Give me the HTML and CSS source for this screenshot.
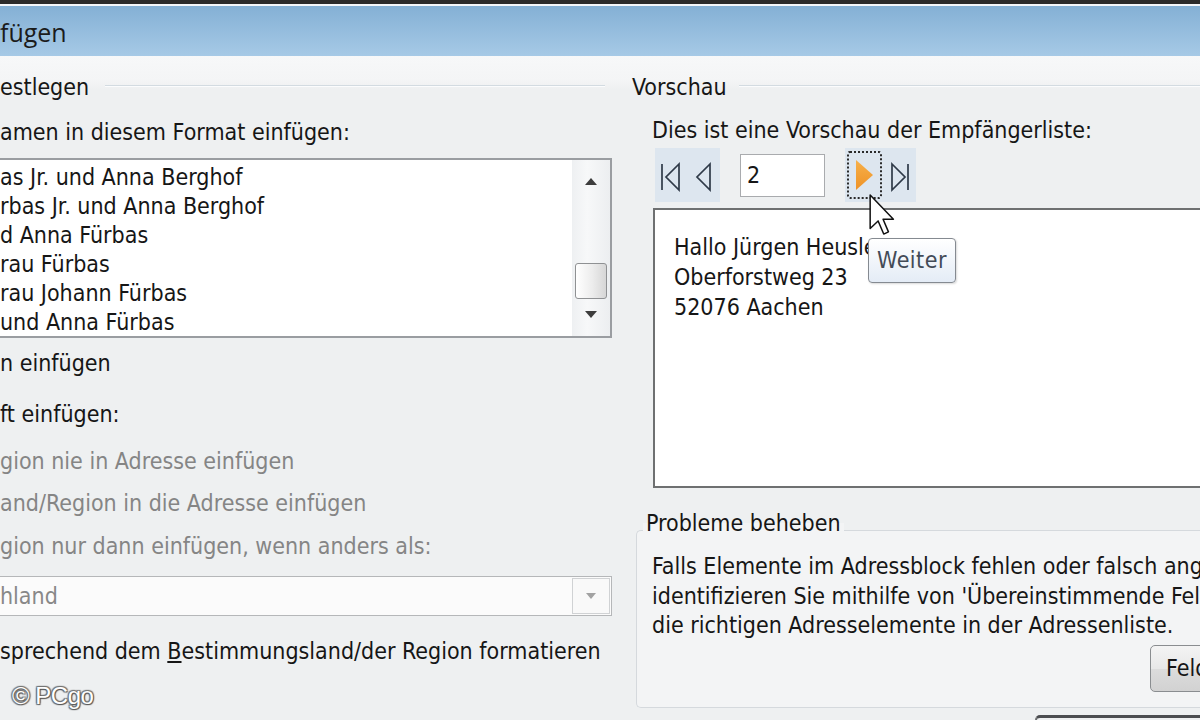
FILE: index.html
```html
<!DOCTYPE html>
<html lang="de">
<head>
<meta charset="utf-8">
<title>Adressblock einfügen</title>
<link rel="stylesheet" href="styles.css">
</head>
<body>
<div class="topline"></div>
<div class="titlebar">fügen</div>
<div class="dialog">
  <div class="left">
    <div class="grouphead"><span>estlegen</span><span class="gline gl-left"></span></div>
    <div class="row r-names">amen in diesem Format einfügen:</div>
    <div class="listbox">
      <div class="items">
        <div class="item">as Jr. und Anna Berghof</div>
        <div class="item">rbas Jr. und Anna Berghof</div>
        <div class="item">d Anna Fürbas</div>
        <div class="item">rau Fürbas</div>
        <div class="item">rau Johann Fürbas</div>
        <div class="item">und Anna Fürbas</div>
      </div>
      <div class="scrollbar">
        <div class="sb-arrow sb-up"></div>
        <div class="sb-thumb"></div>
        <div class="sb-arrow sb-down"></div>
      </div>
    </div>
    <div class="row r-firm">n einfügen</div>
    <div class="row r-post">ft einfügen:</div>
    <div class="row r-rad1 disabled">gion nie in Adresse einfügen</div>
    <div class="row r-rad2 disabled">and/Region in die Adresse einfügen</div>
    <div class="row r-rad3 disabled">gion nur dann einfügen, wenn anders als:</div>
    <div class="combo">
      <div class="combo-text">hland</div>
      <div class="combo-btn"><span class="combo-arrow"></span></div>
    </div>
    <div class="row r-fmt">sprechend dem <u>B</u>estimmungsland/der Region formatieren</div>
  </div>
  <div class="right">
    <div class="grouphead"><span>Vorschau</span><span class="gline gl-right"></span></div>
    <div class="row desc">Dies ist eine Vorschau der Empfängerliste:</div>
    <div class="nav">
      <div class="navgroup">
        <div class="navbtn">
          <svg width="33" height="54" viewBox="0 0 33 54"><path d="M7 16 V42 M24 16 L11 29 L24 42 Z" fill="none" stroke="#2f3a48" stroke-width="1.7" stroke-linejoin="miter"/></svg>
        </div>
        <div class="navbtn">
          <svg width="32" height="54" viewBox="0 0 32 54"><path d="M22 16 L9 29 L22 42 Z" fill="none" stroke="#2f3a48" stroke-width="1.7"/></svg>
        </div>
      </div>
      <div class="recnum">2</div>
      <div class="navgroup">
        <div class="navbtn focus">
          <svg width="31" height="48" viewBox="0 0 31 48"><defs><linearGradient id="og" x1="0" y1="0" x2="0" y2="1"><stop offset="0" stop-color="#f6b04a"/><stop offset="1" stop-color="#ee9226"/></linearGradient></defs><path d="M7 9 L7 39 L24 24 Z" fill="url(#og)"/></svg>
        </div>
        <div class="navbtn">
          <svg width="33" height="54" viewBox="0 0 33 54"><path d="M9 16 L22 29 L9 42 Z M25 16 V42" fill="none" stroke="#2f3a48" stroke-width="1.7"/></svg>
        </div>
      </div>
    </div>
    <div class="preview">
      <div class="pline">Hallo Jürgen Heusler</div>
      <div class="pline">Oberforstweg 23</div>
      <div class="pline">52076 Aachen</div>
      <div class="tooltip">Weiter</div>
      <svg class="cursor" width="26" height="42" viewBox="0 0 12 19.5"><path d="M0.5 0.5 L0.5 16 L4.2 12.5 L6.8 18.6 L9 17.6 L6.5 11.7 L11.3 11.7 Z" fill="#fff" stroke="#111" stroke-width="0.7" stroke-linejoin="round"/></svg>
    </div>
    <div class="group2">
      <div class="g2label">Probleme beheben</div>
      <div class="g2text">Falls Elemente im Adressblock fehlen oder falsch angezeigt werden,<br>identifizieren Sie mithilfe von 'Übereinstimmende Felder'<br>die richtigen Adresselemente in der Adressenliste.</div>
      <div class="btnrow"><div class="button">Felder</div></div>
    </div>
    <div class="nextbtn"></div>
  </div>
</div>
<div class="watermark">© PCgo</div>
</body>
</html>
```
FILE: styles.css
```css
html, body {
  margin: 0;
  padding: 0;
}
body {
  width: 1200px;
  height: 720px;
  overflow: hidden;
  position: relative;
  background: #eef0f1;
  font-family: "DejaVu Sans Condensed", "DejaVu Sans", sans-serif;
  font-stretch: condensed;
  font-size: 23px;
  letter-spacing: 0;
  color: #161616;
}
.topline {
  height: 4px;
  background: #2b2b2b;
  border-bottom: 2px solid #f4f7fa;
}
.titlebar {
  height: 50px;
  line-height: 52px;
  background: linear-gradient(#84b0d5, #a6c9e6);
  font-family: "Open Sans", "Noto Sans", sans-serif;
  font-stretch: normal;
  font-size: 25px;
  color: #1b1b1b;
}
.dialog {
  display: flex;
  gap: 20px;
  background: linear-gradient(#f7f8f9 0px, #f4f5f6 24px, #eef0f1 34px);
  height: 664px;
}
.left {
  width: 612px;
  flex: none;
  display: flex;
  flex-direction: column;
}
.right {
  width: 620px;
  flex: none;
  display: flex;
  flex-direction: column;
}
.left > *, .right > * { flex-shrink: 0; }
.grouphead {
  margin-top: 16px;
  height: 30px;
  display: flex;
  align-items: center;
  white-space: nowrap;
}
.gline {
  flex: 1;
  height: 0;
  border-top: 1px solid #d3dbe1;
  border-bottom: 1px solid #fbfcfd;
  margin-top: -2px;
}
.gl-left { margin-left: 16px; margin-right: 7px; }
.gl-right { margin-left: 12px; }
.row {
  height: 30px;
  line-height: 30px;
  white-space: nowrap;
}
.disabled { color: #858585; }
.r-names { margin-top: 15px; }
.listbox {
  margin-top: 11px;
  height: 180px;
  box-sizing: border-box;
  border: 2px solid #9a9da1;
  border-left: none;
  background: #fff;
  display: flex;
}
.items {
  flex: 1;
  padding-top: 3px;
}
.item {
  height: 29px;
  line-height: 29px;
  white-space: nowrap;
}
.scrollbar {
  width: 38px;
  flex: none;
  background: linear-gradient(90deg, #eef0f2, #f7f8f9 40%, #eceef0);
  display: flex;
  flex-direction: column;
  align-items: center;
}
.sb-arrow {
  width: 0;
  height: 0;
  border-left: 6px solid transparent;
  border-right: 6px solid transparent;
}
.sb-up {
  margin-top: 18px;
  border-bottom: 7px solid #3d3d3d;
}
.sb-thumb {
  margin-top: 78px;
  width: 30px;
  height: 34px;
  border: 1px solid #8f9193;
  border-radius: 3px;
  background: linear-gradient(90deg, #ffffff, #ececec 55%, #d6d6d6);
}
.sb-down {
  margin-top: 12px;
  border-top: 7px solid #3d3d3d;
}
.r-firm { margin-top: 10px; }
.r-post { margin-top: 21px; }
.r-rad1 { margin-top: 17px; }
.r-rad2 { margin-top: 12px; }
.r-rad3 { margin-top: 13px; }
.combo {
  margin-top: 15px;
  height: 40px;
  box-sizing: border-box;
  border: 1px solid #b5b7b9;
  border-left: none;
  background: #fbfbfb;
  display: flex;
}
.combo-text {
  flex: 1;
  line-height: 38px;
  color: #888;
}
.combo-btn {
  width: 36px;
  margin: 1px 1px 1px 0;
  border: 1px solid #d0d2d4;
  background: #f9f9f9;
  display: flex;
  align-items: center;
  justify-content: center;
}
.combo-arrow {
  width: 0;
  height: 0;
  border-left: 5px solid transparent;
  border-right: 5px solid transparent;
  border-top: 6px solid #a2a2a2;
}
.r-fmt { margin-top: 20px; }
.desc {
  margin-top: 13px;
  padding-left: 20px;
}
.nav {
  margin-top: 3px;
  height: 54px;
  padding-left: 23px;
  display: flex;
  align-items: center;
}
.navgroup {
  display: flex;
  background: #dde6ef;
  height: 54px;
}
.navbtn {
  display: flex;
  align-items: center;
  justify-content: center;
}
.navbtn svg { display: block; }
.navbtn.focus {
  margin: 3px 1px 3px 2px;
  border: 2px dotted #2a2a2a;
  border-radius: 3px;
}
.recnum {
  margin: 0 20px;
  width: 85px;
  height: 43px;
  box-sizing: border-box;
  border: 1px solid #a9abae;
  background: #fff;
  line-height: 41px;
  padding-left: 6px;
}
.preview {
  margin-top: 6px;
  margin-left: 21px;
  height: 280px;
  box-sizing: border-box;
  border: 2px solid #6e7071;
  border-right: none;
  background: #fff;
  padding: 22px 0 0 19px;
  position: relative;
}
.pline {
  height: 30px;
  line-height: 30px;
  white-space: nowrap;
}
.tooltip {
  position: absolute;
  left: 213px;
  top: 28px;
  width: 88px;
  height: 45px;
  box-sizing: border-box;
  border: 1px solid #858a91;
  border-radius: 4px;
  background: linear-gradient(#ffffff, #e4ecf6);
  color: #434b57;
  line-height: 43px;
  text-align: center;
  letter-spacing: 0.5px;
  box-shadow: 1px 1px 2px rgba(0,0,0,0.15);
}
.cursor {
  position: absolute;
  left: 214px;
  top: -16px;
}
.group2 {
  margin-top: 42px;
  margin-left: 4px;
  height: 178px;
  box-sizing: border-box;
  border: 1px solid #d5d9dd;
  border-right: none;
  border-radius: 5px 0 0 5px;
  background: #f3f4f5;
}
.g2label {
  display: block;
  width: fit-content;
  margin-top: -23px;
  margin-left: 6px;
  padding: 0 3px;
  height: 30px;
  line-height: 30px;
  background: linear-gradient(#eef0f1 50%, #f3f4f5 50%);
}
.g2text {
  margin-top: 14px;
  padding-left: 15px;
  line-height: 29.5px;
  white-space: nowrap;
}
.btnrow {
  margin-top: 4px;
  padding-left: 513px;
}
.button {
  width: 120px;
  height: 47px;
  box-sizing: border-box;
  border: 1px solid #8a8d90;
  border-radius: 5px;
  background: linear-gradient(#f4f4f4, #e8e8e8 50%, #dcdcdc 51%, #d2d2d2);
  line-height: 45px;
  padding-left: 15px;
}
.nextbtn {
  margin-top: 7px;
  margin-left: 403px;
  width: 200px;
  height: 10px;
  border-top: 3px solid #4b4d50;
  border-left: 2px solid #6a6c6e;
  border-radius: 5px 0 0 0;
}
.watermark {
  position: absolute;
  left: 12px;
  top: 682px;
  font-family: "Liberation Sans", sans-serif;
  font-stretch: normal;
  font-size: 24px;
  letter-spacing: -0.5px;
  color: #fff;
  text-shadow: 0 0 1px #555, 1px 1px 1px #555, -1px -1px 1px #777, 1px -1px 1px #777, -1px 1px 1px #777;
}
```
